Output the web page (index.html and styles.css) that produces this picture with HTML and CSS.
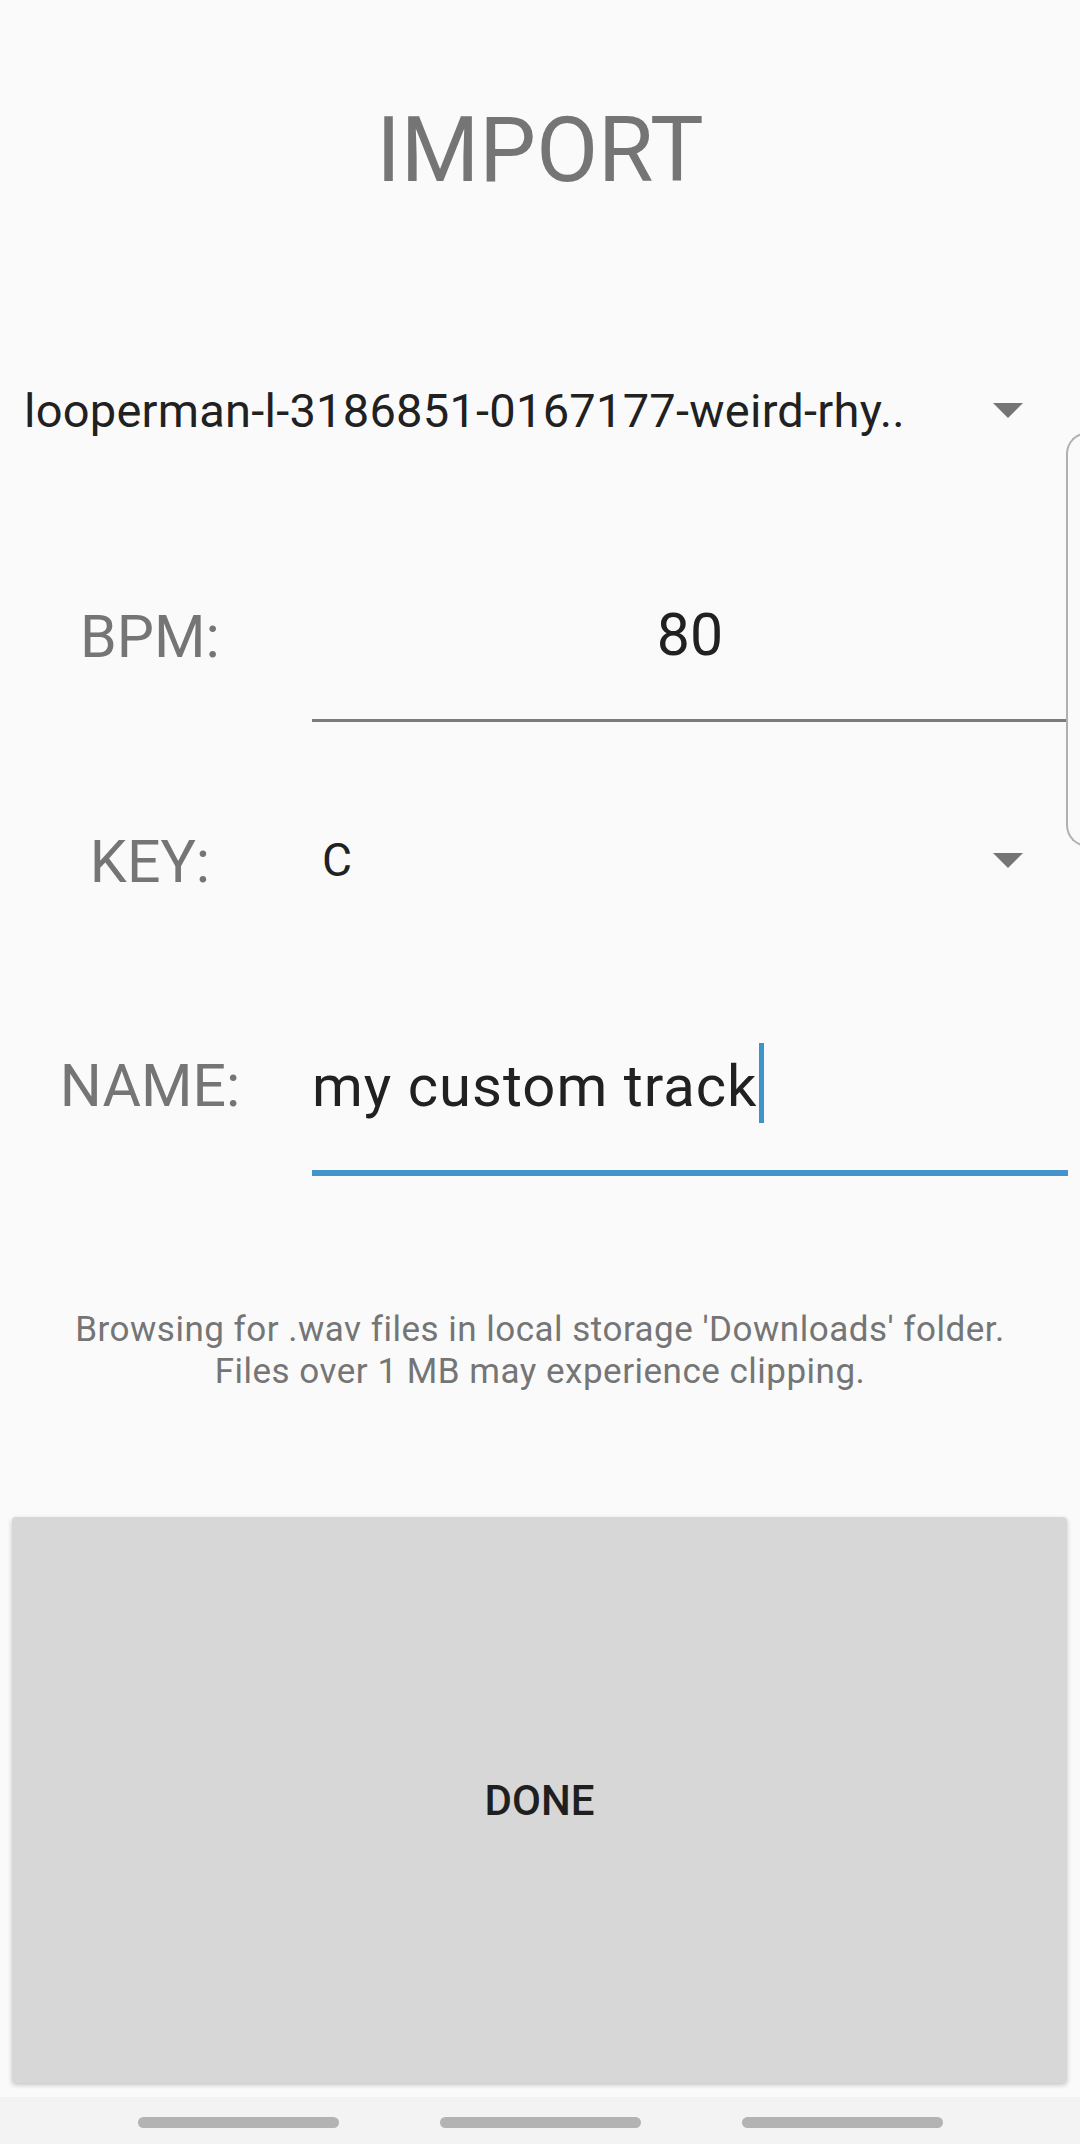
FILE: index.html
```html
<!DOCTYPE html>
<html>
<head>
<meta charset="utf-8">
<link rel="stylesheet" href="styles.css">
</head>
<body>
<div class="screen">
  <h1 class="title">IMPORT</h1>

  <div class="file-row">
    <span class="file-name">looperman-l-3186851-0167177-weird-rhy..</span>
    <svg class="arrow" width="30" height="15" viewBox="0 0 30 15"><path d="M0 0 H30 L15 15 Z" fill="#757575"/></svg>
  </div>

  <div class="row bpm-row">
    <div class="label">BPM:</div>
    <div class="field bpm-field">80</div>
  </div>

  <div class="row key-row">
    <div class="label">KEY:</div>
    <div class="field key-field">
      <span class="key-value">C</span>
      <svg class="arrow" width="30" height="15" viewBox="0 0 30 15"><path d="M0 0 H30 L15 15 Z" fill="#757575"/></svg>
    </div>
  </div>

  <div class="row name-row">
    <div class="label">NAME:</div>
    <div class="field name-field">my custom track<span class="cursor"></span></div>
  </div>

  <p class="help">Browsing for .wav files in local storage 'Downloads' folder.<br>Files over 1 MB may experience clipping.</p>

  <div class="done-btn">DONE</div>

  <div class="nav-bar">
    <span class="pill"></span>
    <span class="pill"></span>
    <span class="pill"></span>
  </div>

  <div class="edge-handle"></div>
</div>
</body>
</html>
```

FILE: styles.css
```css
html, body {
  margin: 0;
  padding: 0;
  background: #fafafa;
  overflow: hidden;
}

.screen {
  position: relative;
  width: 1080px;
  height: 2144px;
  font-family: Roboto, "Liberation Sans", sans-serif;
  background: #fafafa;
  display: flex;
  flex-direction: column;
}

.title {
  margin: 0;
  padding-top: 106px;
  font-size: 90px;
  line-height: 90px;
  font-weight: 400;
  color: #757575;
  text-align: center;
}

.file-row {
  margin-top: 191px;
  height: 47px;
  display: flex;
  align-items: center;
  padding-left: 24px;
  padding-right: 57px;
}

.file-name {
  font-size: 47px;
  line-height: 47px;
  letter-spacing: 0.25px;
  color: #212121;
  white-space: nowrap;
}

.arrow {
  margin-left: auto;
  display: block;
  flex: none;
}

.row {
  display: grid;
  grid-template-columns: 300px 756px;
  column-gap: 12px;
}

.label {
  text-align: center;
  font-size: 59px;
  line-height: 59px;
  color: #757575;
}

.bpm-row {
  margin-top: 171px;
}

.bpm-row .label {
  padding-top: 2px;
}

.bpm-field {
  font-size: 59px;
  line-height: 59px;
  color: #212121;
  text-align: center;
  padding-bottom: 55px;
  border-bottom: 3px solid #7b7b7b;
}

.key-row {
  margin-top: 110px;
}

.key-field {
  display: flex;
  align-items: center;
  height: 47px;
  margin-top: 5px;
  padding-left: 10px;
  padding-right: 45px;
}

.key-value {
  font-size: 46px;
  line-height: 47px;
  color: #212121;
}

.name-row {
  margin-top: 165px;
}

.name-field {
  margin-top: 2px;
  font-size: 58px;
  line-height: 56px;
  letter-spacing: 1px;
  color: #212121;
  padding-bottom: 55px;
  border-bottom: 6px solid #4394cb;
  white-space: nowrap;
}

.cursor {
  display: inline-block;
  width: 5px;
  height: 80px;
  margin-left: 1px;
  background: #3f93cd;
  vertical-align: -9px;
  margin-top: -16px;
  margin-bottom: -8px;
}

.help {
  margin: 133px 0 0;
  font-size: 35px;
  line-height: 42px;
  letter-spacing: 0.5px;
  color: #757575;
  text-align: center;
}

.done-btn {
  margin: 124px 13px 0 12px;
  height: 566px;
  background: #d6d7d6;
  border-radius: 4px;
  box-shadow: 0 2px 5px rgba(0, 0, 0, 0.22);
  display: flex;
  align-items: center;
  justify-content: center;
  font-size: 42px;
  font-weight: 500;
  color: #1f1f1f;
}

.nav-bar {
  margin-top: auto;
  height: 47px;
  background: #f3f3f3;
  display: flex;
  justify-content: center;
  align-items: center;
  gap: 101px;
  padding-top: 4px;
  box-sizing: border-box;
}

.pill {
  width: 201px;
  height: 11px;
  border-radius: 6px;
  background: #b3b3b3;
}

.edge-handle {
  position: absolute;
  left: 1066px;
  top: 432px;
  width: 40px;
  height: 411px;
  border: 2px solid #b0b0b0;
  border-right: none;
  border-radius: 22px 0 0 22px;
}
```
